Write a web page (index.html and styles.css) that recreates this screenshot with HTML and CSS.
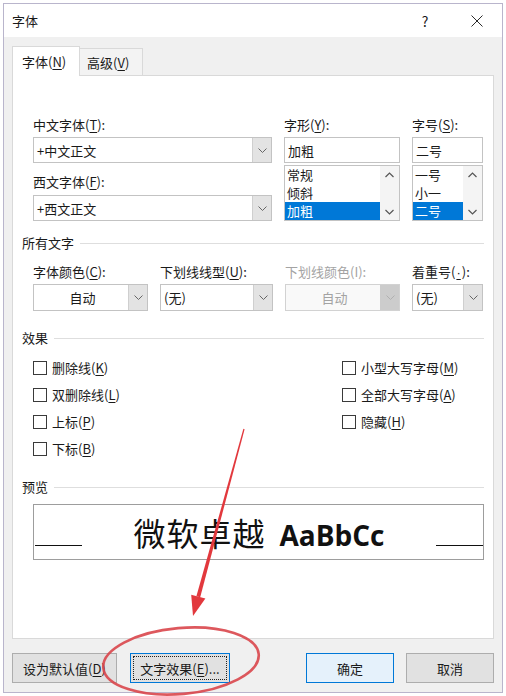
FILE: index.html
```html
<!DOCTYPE html>
<html lang="zh-CN">
<head>
    <meta charset="UTF-8">
    <meta name="viewport" content="width=device-width, initial-scale=1.0">
    <title>字体</title>
    <link rel="stylesheet" href="styles.css">
</head>
<body>
    <div class="window">
        <div class="titlebar">
            <span class="title">字体</span>
            <span class="help">?</span>
            <span class="close">
                <svg width="12" height="12" viewBox="0 0 12 12"><path d="M0.5 0.5L11.5 11.5M11.5 0.5L0.5 11.5" stroke="#2b2b2b" stroke-width="1"/></svg>
            </span>
        </div>

        <div class="dialog">
            <div class="tabs">
                <div class="tab active">字体(<u>N</u>)</div>
                <div class="tab">高级(<u>V</u>)</div>
            </div>

            <div class="page">
                <!-- font / style / size -->
                <div class="font-row">
                    <div class="col">
                        <div class="label">中文字体(<u>T</u>):</div>
                        <div class="combo">
                            <span class="value">+中文正文</span>
                            <span class="drop"><svg width="9" height="5" viewBox="0 0 9 5"><path d="M0.5 0.5L4.5 4.5L8.5 0.5" fill="none" stroke="#666"/></svg></span>
                        </div>
                        <div class="label second">西文字体(<u>F</u>):</div>
                        <div class="combo">
                            <span class="value">+西文正文</span>
                            <span class="drop"><svg width="9" height="5" viewBox="0 0 9 5"><path d="M0.5 0.5L4.5 4.5L8.5 0.5" fill="none" stroke="#666"/></svg></span>
                        </div>
                    </div>

                    <div class="col">
                        <div class="label">字形(<u>Y</u>):</div>
                        <div class="textbox">加粗</div>
                        <div class="listbox">
                            <ul class="items">
                                <li>常规</li>
                                <li>倾斜</li>
                                <li class="sel">加粗</li>
                            </ul>
                            <div class="scroll">
                                <svg width="9" height="6" viewBox="0 0 9 6"><path d="M0.5 5L4.5 1L8.5 5" fill="none" stroke="#555" stroke-width="1.2"/></svg>
                                <svg width="9" height="6" viewBox="0 0 9 6"><path d="M0.5 1L4.5 5L8.5 1" fill="none" stroke="#555" stroke-width="1.2"/></svg>
                            </div>
                        </div>
                    </div>

                    <div class="col">
                        <div class="label">字号(<u>S</u>):</div>
                        <div class="textbox">二号</div>
                        <div class="listbox">
                            <ul class="items">
                                <li>一号</li>
                                <li>小一</li>
                                <li class="sel">二号</li>
                            </ul>
                            <div class="scroll">
                                <svg width="9" height="6" viewBox="0 0 9 6"><path d="M0.5 5L4.5 1L8.5 5" fill="none" stroke="#555" stroke-width="1.2"/></svg>
                                <svg width="9" height="6" viewBox="0 0 9 6"><path d="M0.5 1L4.5 5L8.5 1" fill="none" stroke="#555" stroke-width="1.2"/></svg>
                            </div>
                        </div>
                    </div>
                </div>

                <!-- all text -->
                <div class="group-title first">所有文字</div>
                <div class="color-row">
                    <div class="col">
                        <div class="label">字体颜色(<u>C</u>):</div>
                        <div class="combo tall">
                            <span class="value center">自动</span>
                            <span class="drop"><svg width="9" height="5" viewBox="0 0 9 5"><path d="M0.5 0.5L4.5 4.5L8.5 0.5" fill="none" stroke="#666"/></svg></span>
                        </div>
                    </div>
                    <div class="col">
                        <div class="label">下划线线型(<u>U</u>):</div>
                        <div class="combo tall">
                            <span class="value">(无)</span>
                            <span class="drop"><svg width="9" height="5" viewBox="0 0 9 5"><path d="M0.5 0.5L4.5 4.5L8.5 0.5" fill="none" stroke="#666"/></svg></span>
                        </div>
                    </div>
                    <div class="col">
                        <div class="label disabled">下划线颜色(I):</div>
                        <div class="combo tall disabled">
                            <span class="value center">自动</span>
                            <span class="drop"><svg width="9" height="5" viewBox="0 0 9 5"><path d="M0.5 0.5L4.5 4.5L8.5 0.5" fill="none" stroke="#b0b0b0"/></svg></span>
                        </div>
                    </div>
                    <div class="col">
                        <div class="label">着重号(<u class="dot">·</u>):</div>
                        <div class="combo tall">
                            <span class="value">(无)</span>
                            <span class="drop"><svg width="9" height="5" viewBox="0 0 9 5"><path d="M0.5 0.5L4.5 4.5L8.5 0.5" fill="none" stroke="#666"/></svg></span>
                        </div>
                    </div>
                </div>

                <!-- effects -->
                <div class="group-title effects">效果</div>
                <div class="checks">
                    <div class="check"><span class="box"></span>删除线(<u>K</u>)</div>
                    <div class="check"><span class="box"></span>小型大写字母(<u>M</u>)</div>
                    <div class="check"><span class="box"></span>双删除线(<u>L</u>)</div>
                    <div class="check"><span class="box"></span>全部大写字母(<u>A</u>)</div>
                    <div class="check"><span class="box"></span>上标(<u>P</u>)</div>
                    <div class="check"><span class="box"></span>隐藏(<u>H</u>)</div>
                    <div class="check"><span class="box"></span>下标(<u>B</u>)</div>
                </div>

                <!-- preview -->
                <div class="group-title preview-title">预览</div>
                <div class="preview">
                    <span class="rule"></span>
                    <span class="sample"><span class="cjk">微软卓越</span><span class="latin">AaBbCc</span></span>
                    <span class="rule"></span>
                </div>
            </div>

            <div class="buttons">
                <button class="btn wide">设为默认值(<u>D</u>)</button>
                <button class="btn effect"><span class="focus">文字效果(<u>E</u>)...</span></button>
                <button class="btn ok">确定</button>
                <button class="btn">取消</button>
            </div>
        </div>
    </div>

    <!-- red annotation drawn over the dialog -->
    <svg class="annotation" width="506" height="696" viewBox="0 0 506 696">
        <polygon points="244.6,429.2 243.4,428.8 196.4,596.2 200.2,597.2" fill="#e2383d"/>
        <polygon points="193,616 205.4,598.6 191.2,594.8" fill="#e2383d"/>
        <ellipse cx="181" cy="661" rx="78" ry="33" transform="rotate(-5 181 661)" fill="none" stroke="#d9464b" stroke-width="2.6" opacity="0.9"/>
    </svg>
</body>
</html>
```

FILE: styles.css
```css
* {
    box-sizing: border-box;
}
body {
    margin: 0;
    width: 506px;
    height: 696px;
    position: relative;
    background: #fff;
    font-family: "Noto Sans CJK SC", "Noto Sans", sans-serif;
    font-size: 13px;
    color: #1a1a1a;
}
u {
    text-decoration: underline;
    text-underline-offset: 2px;
}
u.dot {
    font-family: "Liberation Sans", sans-serif;
    padding: 0 1px;
}
.window {
    margin: 3px 3px 0 3px;
    width: 500px;
    height: 690px;
    border: 1px solid #b9b5cc;
    display: flex;
    flex-direction: column;
}
.titlebar {
    height: 33px;
    background: #fff;
    display: flex;
    align-items: center;
    padding-left: 8px;
}
.title {
    flex: 1;
}
.help {
    width: 24px;
    text-align: center;
    font-size: 14px;
    margin-right: 15px;
}
.close {
    width: 50px;
    display: flex;
    justify-content: center;
}
.dialog {
    flex: 1;
    background: #f0f0f0;
    padding: 9px 8px 9px 8px;
    display: flex;
    flex-direction: column;
}
.tabs {
    height: 29px;
    display: flex;
    align-items: flex-end;
    position: relative;
    z-index: 1;
}
.tab {
    height: 27px;
    width: 63px;
    padding-left: 7px;
    display: flex;
    align-items: center;
    background: #f3f3f3;
    border: 1px solid #d9d9d9;
    border-left: none;
    border-bottom: none;
}
.tab.active {
    height: 30px;
    width: 68px;
    padding-left: 9px;
    margin-bottom: -1px;
    background: #fff;
    border-left: 1px solid #d9d9d9;
}
.page {
    flex: 1;
    background: #fff;
    border: 1px solid #d9d9d9;
    padding: 0 9px;
}
.label {
    line-height: 16px;
    height: 16px;
    white-space: nowrap;
}
.label.disabled {
    color: #a3a3a3;
}
.font-row {
    margin: 41px 0 0 11px;
    display: grid;
    grid-template-columns: 239px 116px 71px;
    column-gap: 12px;
}
.col {
    display: flex;
    flex-direction: column;
}
.col .label {
    margin-bottom: 4px;
}
.col .label.second {
    margin-top: 11px;
    margin-bottom: 5px;
}
.combo {
    height: 26px;
    display: flex;
    border: 1px solid #c3c3c3;
    background: #fff;
}
.combo.tall {
    height: 27px;
}
.combo .value {
    flex: 1;
    padding-left: 3px;
    display: flex;
    align-items: center;
}
.combo .value.center {
    justify-content: center;
}
.combo .drop {
    width: 19px;
    background: #e3e3e3;
    border-left: 1px solid #cfcfcf;
    display: flex;
    align-items: center;
    justify-content: center;
}
.combo.disabled {
    background: #f9f9f9;
    border-color: #d2d2d2;
    color: #a3a3a3;
}
.combo.disabled .drop {
    background: #cccccc;
    border-left-color: #cccccc;
}
.textbox {
    height: 26px;
    border: 1px solid #c3c3c3;
    padding-left: 3px;
    display: flex;
    align-items: center;
}
.listbox {
    margin-top: 2px;
    height: 56px;
    border: 1px solid #c3c3c3;
    display: flex;
}
.items {
    flex: 1;
    list-style: none;
    margin: 0;
    padding: 0;
}
.items li {
    height: 18px;
    line-height: 18px;
    padding-left: 2px;
}
.items li.sel {
    background: #0078d7;
    color: #fff;
}
.scroll {
    width: 19px;
    background: #f4f4f4;
    display: flex;
    flex-direction: column;
    align-items: center;
    justify-content: space-between;
    padding: 6px 0 5px;
}
.group-title {
    display: flex;
    align-items: center;
    line-height: 16px;
    height: 16px;
}
.group-title::after {
    content: "";
    flex: 1;
    height: 1px;
    background: #dedede;
    margin-left: 6px;
}
.group-title.first {
    margin-top: 14px;
}
.color-row {
    margin: 13px 0 0 11px;
    display: grid;
    grid-template-columns: 115px 113px 115px 71px;
    column-gap: 12px;
}
.group-title.effects {
    margin-top: 19px;
}
.checks {
    margin: 8px 0 0 11px;
    display: grid;
    grid-template-columns: 309px 1fr;
    grid-auto-rows: 27px;
}
.check {
    display: flex;
    align-items: center;
    white-space: nowrap;
}
.check .box {
    width: 14px;
    height: 14px;
    border: 1px solid #3a3a3a;
    background: #fff;
    margin-right: 5px;
}
.group-title.preview-title {
    margin-top: 17px;
}
.preview {
    margin: 9px 0 0 11px;
    height: 56px;
    border: 1px solid #9d9d9d;
    display: flex;
    align-items: center;
    justify-content: space-between;
}
.rule {
    width: 47px;
    height: 1px;
    background: #111;
    margin-top: 26px;
}
.preview .rule:first-child {
    margin-left: 1px;
}
.sample {
    color: #111;
    white-space: nowrap;
}
.sample .cjk {
    font-size: 32px;
    letter-spacing: 1px;
}
.sample .latin {
    font-family: "Open Sans", "Noto Sans", sans-serif;
    font-weight: 700;
    font-size: 28px;
    margin-left: 14px;
}
.buttons {
    margin-top: 14px;
    height: 30px;
    display: flex;
}
.btn {
    height: 30px;
    width: 88px;
    font: inherit;
    color: #1a1a1a;
    background: #e1e1e1;
    border: 1px solid #adadad;
    padding: 0;
}
.btn.wide {
    width: 105px;
}
.btn.effect {
    width: 100px;
    margin-left: 13px;
    border-color: #0078d7;
    padding: 2px;
}
.btn .focus {
    display: flex;
    height: 100%;
    align-items: center;
    justify-content: center;
    border: 1px dotted #222;
}
.btn.ok {
    margin-left: auto;
    margin-right: 12px;
    background: #e5f1fb;
    border-color: #0078d7;
}
.annotation {
    position: absolute;
    top: 0;
    left: 0;
    pointer-events: none;
}
```
